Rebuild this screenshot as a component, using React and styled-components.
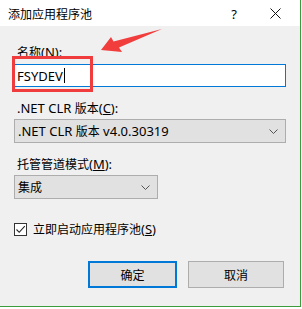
import React from "react";
import styled, { createGlobalStyle } from "styled-components";

const GlobalStyle = createGlobalStyle`
  html, body {
    margin: 0;
    padding: 0;
    background: #fff;
  }
  * {
    box-sizing: border-box;
  }
`;

const App = () => {
  return (
    <>
      <GlobalStyle />
      <Window>
        <TitleBar>
          <Title>添加应用程序池</Title>
          <HelpBtn>?</HelpBtn>
          <CloseBtn>
            <svg width="11" height="11" viewBox="0 0 11 11">
              <path d="M0.5 0.5 L10.5 10.5 M10.5 0.5 L0.5 10.5" stroke="#111" strokeWidth="1" fill="none" />
            </svg>
          </CloseBtn>
        </TitleBar>

        <Body>
          <Label style={{ marginTop: 18 }}>
            <Han>名称</Han>(<u>N</u>):
          </Label>
          <TextBox>
            FSYDEV<Caret />
          </TextBox>

          <Label style={{ marginTop: 13 }}>
            .NET CLR <Han>版本</Han>(<u>C</u>):
          </Label>
          <Select>
            <span>
              .NET CLR <Han>版本</Han> v4.0.30319
            </span>
            <Chevron />
          </Select>

          <Label style={{ marginTop: 13 }}>
            <Han>托管管道模式</Han>(<u>M</u>):
          </Label>
          <Select small>
            <Han>集成</Han>
            <Chevron />
          </Select>

          <CheckRow>
            <CheckBox>
              <svg width="11" height="11" viewBox="0 0 11 11">
                <path d="M1.5 5.5 L4.2 8.3 L9.8 2.2" stroke="#222" strokeWidth="1.1" fill="none" />
              </svg>
            </CheckBox>
            <CheckLabel>
              <Han>立即启动应用程序池</Han>(<u>S</u>)
            </CheckLabel>
          </CheckRow>

          <ButtonRow>
            <Button primary>
              <Han>确定</Han>
            </Button>
            <Button wide>
              <Han>取消</Han>
            </Button>
          </ButtonRow>
        </Body>

        <Annotation width="302" height="309" viewBox="0 0 302 309">
          <rect x="13.5" y="57.5" width="78" height="33" fill="none" stroke="#f03c3c" strokeWidth="3" />
          <path d="M101 50 L111 37 L113.5 41.5 L162 29 L119 47.5 L122 52 Z" fill="#f23d3d" />
        </Annotation>
      </Window>
    </>
  );
};

const Window = styled.div`
  position: relative;
  width: 301px;
  height: 307px;
  border-right: 1px solid #3c9c3c;
  border-bottom: 1px solid #3c9c3c;
  display: flex;
  flex-direction: column;
  font-family: "Noto Sans", "Noto Sans CJK SC", sans-serif;
  font-size: 13px;
  color: #000;
`;

const Han = styled.span`
  font-family: "Noto Sans CJK SC", sans-serif;
  font-size: 12px;
`;

const TitleBar = styled.div`
  height: 26px;
  background: #fff;
  display: flex;
  align-items: center;
  padding-left: 8px;
`;

const Title = styled.div`
  flex: 1;
  font-family: "Noto Sans CJK SC", sans-serif;
  font-size: 12px;
  line-height: 16px;
  margin-top: 1px;
`;

const HelpBtn = styled.div`
  width: 20px;
  text-align: center;
  font-size: 13px;
  margin-right: 26px;
  margin-top: 1px;
`;

const CloseBtn = styled.div`
  width: 12px;
  display: flex;
  align-items: center;
  margin-right: 18px;
  margin-top: 1px;
`;

const Body = styled.div`
  flex: 1;
  background: #f0f0f0;
  display: flex;
  flex-direction: column;
  padding: 0 15px 0 14px;
`;

const Label = styled.div`
  line-height: 16px;
  height: 16px;
  padding-left: 3px;
  white-space: nowrap;
`;

const TextBox = styled.div`
  margin-top: 4px;
  height: 23px;
  width: 272px;
  background: #fff;
  border: 1px solid #0078d7;
  display: flex;
  align-items: center;
  padding-left: 2px;
  line-height: 16px;
`;

const Caret = styled.span`
  display: inline-block;
  width: 1px;
  height: 15px;
  background: #000;
  margin-left: 1px;
`;

const Select = styled.div`
  margin-top: 3px;
  height: 24px;
  width: ${(p) => (p.small ? "144px" : "272px")};
  background: #e1e1e1;
  border: 1px solid #adadad;
  display: flex;
  align-items: center;
  justify-content: space-between;
  padding: 0 7px 0 3px;
  line-height: 16px;
  white-space: nowrap;
`;

const Chevron = () => (
  <svg width="9" height="5" viewBox="0 0 9 5">
    <path d="M0.5 0.5 L4.5 4.5 L8.5 0.5" stroke="#555" strokeWidth="1" fill="none" />
  </svg>
);

const CheckRow = styled.div`
  margin-top: 23px;
  display: flex;
  align-items: center;
  height: 14px;
`;

const CheckBox = styled.div`
  width: 13px;
  height: 13px;
  border: 1px solid #333;
  background: #fff;
  display: flex;
  align-items: center;
  justify-content: center;
`;

const CheckLabel = styled.div`
  margin-left: 6px;
  line-height: 16px;
`;

const ButtonRow = styled.div`
  margin-top: 25px;
  display: flex;
  justify-content: flex-end;
  gap: 11px;
  padding-right: 1px;
`;

const Button = styled.div`
  height: 27px;
  width: ${(p) => (p.wide ? "96px" : "89px")};
  background: #e1e1e1;
  border: ${(p) => (p.primary ? "2px solid #0078d7" : "1px solid #adadad")};
  display: flex;
  align-items: center;
  justify-content: center;
  line-height: 16px;
`;

const Annotation = styled.svg`
  position: absolute;
  left: 0;
  top: 0;
  pointer-events: none;
`;

export default App;
